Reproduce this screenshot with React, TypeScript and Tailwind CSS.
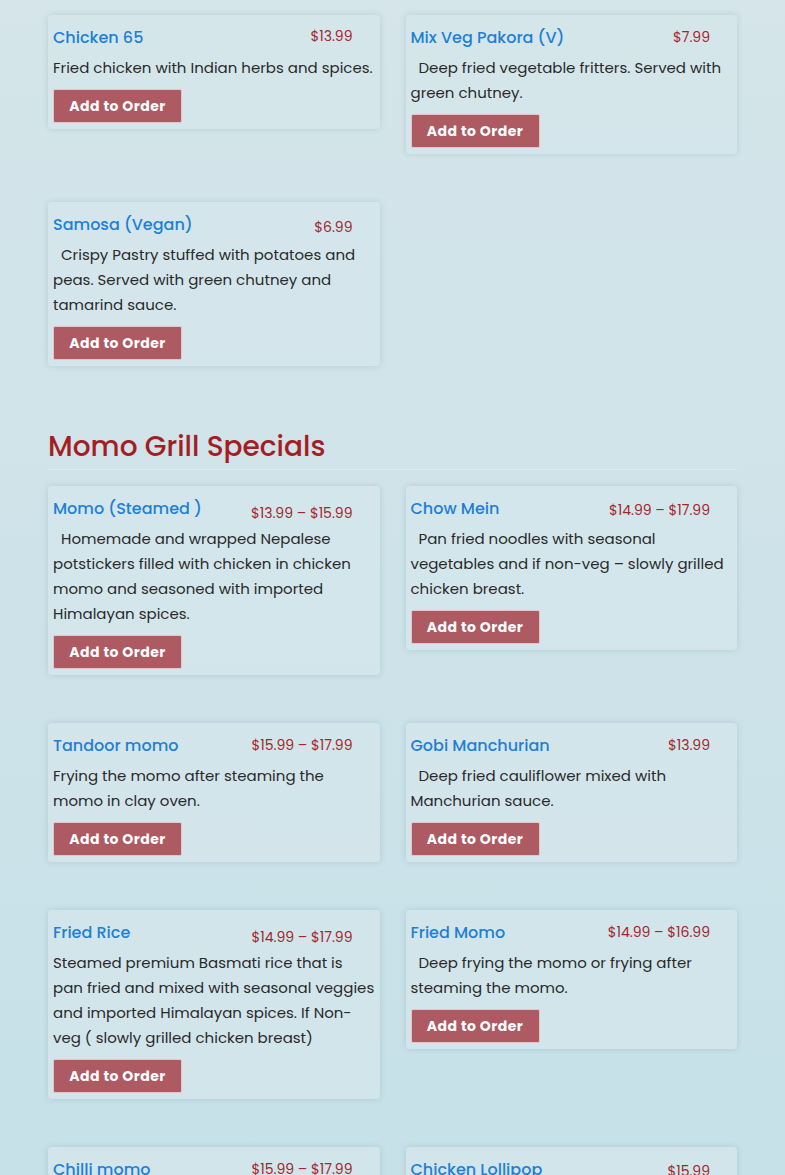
import React from "react";

interface MenuItem {
  name: string;
  price: string;
  desc: string;
  priceShift?: string;
}

const starters: MenuItem[] = [
  { name: "Chicken 65", price: "$13.99", desc: "Fried chicken with Indian herbs and spices.", priceShift: "-translate-y-[1px]" },
  { name: "Mix Veg Pakora (V)", price: "$7.99", desc: "\u00a0\u00a0Deep fried vegetable fritters. Served with green chutney." },
  { name: "Samosa (Vegan)", price: "$6.99", desc: "\u00a0\u00a0Crispy Pastry stuffed with potatoes and peas. Served with green chutney and tamarind sauce.", priceShift: "translate-y-[3px]" },
];

const specials: MenuItem[] = [
  { name: "Momo (Steamed )", price: "$13.99 – $15.99", desc: "\u00a0\u00a0Homemade and wrapped Nepalese potstickers filled with chicken in chicken momo and seasoned with imported Himalayan spices.", priceShift: "translate-y-[5px]" },
  { name: "Chow Mein", price: "$14.99 – $17.99", desc: "\u00a0\u00a0Pan fried noodles with seasonal vegetables and if non-veg – slowly grilled chicken breast.", priceShift: "translate-y-[2px]" },
  { name: "Tandoor momo", price: "$15.99 – $17.99", desc: "Frying the momo after steaming the momo in clay oven." },
  { name: "Gobi Manchurian", price: "$13.99", desc: "\u00a0\u00a0Deep fried cauliflower mixed with Manchurian sauce." },
  { name: "Fried Rice", price: "$14.99 – $17.99", desc: "Steamed premium Basmati rice that is pan fried and mixed with seasonal veggies and imported Himalayan spices. If Non-veg ( slowly grilled chicken breast)", priceShift: "translate-y-[5px]" },
  { name: "Fried Momo", price: "$14.99 – $16.99", desc: "\u00a0\u00a0Deep frying the momo or frying after steaming the momo." },
  { name: "Chilli momo", price: "$15.99 – $17.99", desc: "Deep fried momo tossed in spicy chilli sauce with onions and peppers." },
  { name: "Chicken Lollipop", price: "$15.99", desc: "Frenched chicken wings marinated and deep fried.", priceShift: "translate-y-[2px]" },
];

function MenuCard({ item }: { item: MenuItem }) {
  return (
    <div className="bg-[#d4e6eb]/80 rounded-[4px] shadow-[0_0_6px_rgba(60,100,120,0.18)] pl-[5px] pr-[5px] pt-[10px] pb-[6px]">
      <div className="flex items-start justify-between pr-[22px]">
        <h3 className="text-[16px] leading-[25px] font-medium text-[#1d80d6]">{item.name}</h3>
        <span className={`text-[14px] leading-[25px] text-[#a3262d] ${item.priceShift ?? ""}`}>{item.price}</span>
      </div>
      <p className="mt-[5px] text-[15px] leading-[25px] text-[#2a2a2a]">{item.desc}</p>
      <button className="mt-[9px] h-[34px] w-[129px] rounded-[2px] border border-[#e6c3c6] bg-[#ad5a62] text-[14px] font-bold tracking-[0.45px] text-white">
        Add to Order
      </button>
    </div>
  );
}

export default function App() {
  return (
    <div
      className="h-[1175px] overflow-hidden bg-gradient-to-b from-[#d5e5ea] to-[#c6e1e8] px-[48px] pt-[15px]"
      style={{ fontFamily: "'Poppins', 'Open Sans', 'Noto Sans', sans-serif" }}
    >
      <div className="grid grid-cols-2 items-start gap-x-[26px] gap-y-[48px]">
        {starters.map((item) => (
          <MenuCard key={item.name} item={item} />
        ))}
      </div>

      <div className="mt-[59px] border-b border-white/30">
        <h2 className="text-[28px] leading-[44px] font-medium text-[#a51d24]">Momo Grill Specials</h2>
      </div>

      <div className="mt-[16px] grid grid-cols-2 items-start gap-x-[26px] gap-y-[48px]">
        {specials.map((item) => (
          <MenuCard key={item.name} item={item} />
        ))}
      </div>
    </div>
  );
}
